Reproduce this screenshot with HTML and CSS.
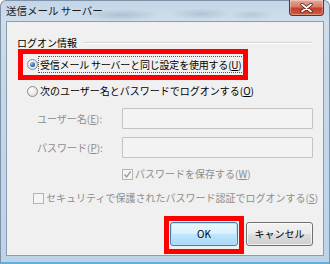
FILE: index.html
```html
<!DOCTYPE html>
<html lang="ja">
<head>
<meta charset="utf-8">
<title>送信メール サーバー</title>
<link rel="stylesheet" href="styles.css">
</head>
<body>
<div class="window">
  <div class="titlebar">
    <span class="title">送信メール サーバー</span>
    <div class="close">
      <svg width="13" height="10" viewBox="0 0 13 10"><path d="M2 1.5 L11 8.5 M11 1.5 L2 8.5" stroke="#3a1010" stroke-width="3.2" stroke-linecap="round"/><path d="M2 1.5 L11 8.5 M11 1.5 L2 8.5" stroke="#ffffff" stroke-width="1.8" stroke-linecap="round"/></svg>
    </div>
  </div>
  <div class="content">
    <div class="group-head"><span class="group-label">ログオン情報</span><span class="sep"></span></div>
    <div class="mark mark-radio">
      <div class="option">
        <span class="radio checked"></span>
        <span class="focus">受信メール サーバーと同じ設定を使用する(<u>U</u>)</span>
      </div>
    </div>
    <div class="option second">
      <span class="radio"></span>
      <span class="text">次のユーザー名とパスワードでログオンする(<u>O</u>)</span>
    </div>
    <div class="field first"><span class="field-label">ユーザー名(<u>E</u>):</span><span class="input"></span></div>
    <div class="field"><span class="field-label">パスワード(<u>P</u>):</span><span class="input"></span></div>
    <div class="check save">
      <span class="box"><svg width="9" height="9" viewBox="0 0 9 9"><path d="M1.5 4.5 L3.6 7 L7.6 1.5" fill="none" stroke="#9a9a9a" stroke-width="1.3"/></svg></span>
      <span class="check-text">パスワードを保存する(<u>W</u>)</span>
    </div>
    <div class="check spa">
      <span class="box"></span>
      <span class="check-text">セキュリティで保護されたパスワード認証でログオンする(<u>S</u>)</span>
    </div>
    <div class="buttons">
      <div class="mark mark-ok"><div class="btn ok">OK</div></div>
      <div class="btn cancel">キャンセル</div>
    </div>
  </div>
</div>
</body>
</html>
```
FILE: styles.css
```css
html, body {
  margin: 0;
  padding: 0;
}
body {
  width: 330px;
  height: 264px;
  overflow: hidden;
  font-family: "Noto Sans CJK JP", "Noto Sans", sans-serif;
  font-size: 10px;
  color: #000;
}
.window {
  width: 330px;
  height: 264px;
  box-sizing: border-box;
  display: flex;
  flex-direction: column;
  background:
    radial-gradient(ellipse 40px 6px at 120px 14px, rgba(120,140,165,0.35), transparent),
    radial-gradient(ellipse 30px 6px at 200px 13px, rgba(120,140,165,0.3), transparent),
    radial-gradient(ellipse 22px 5px at 250px 14px, rgba(120,140,165,0.25), transparent),
    linear-gradient(to bottom, #c3d5e7 0px, #cfdeec 20px, #c6d9eb 60px, #bcd3e8 100%);
  border: 1px solid #7f93a8;
  border-bottom: 2px solid #5fb2d9;
  border-radius: 6px 6px 0 0;
}
.titlebar {
  height: 20px;
  display: flex;
  align-items: flex-start;
}
.title {
  margin-left: 5px;
  margin-top: 3px;
  line-height: 14px;
  font-size: 10.5px;
  color: #1a1a1a;
}
.close {
  margin-left: auto;
  margin-right: 5px;
  margin-top: -1px;
  width: 35px;
  height: 16px;
  box-sizing: border-box;
  border: 1px solid #6b2a28;
  border-top: none;
  border-radius: 0 0 4px 4px;
  background: linear-gradient(to bottom, #e8a899 0%, #d67b68 45%, #c4402b 55%, #d05a3f 100%);
  display: flex;
  align-items: center;
  justify-content: center;
  box-shadow: inset 0 0 0 1px rgba(255,255,255,0.35);
}
.content {
  margin: 0 5px 6px 5px;
  flex: 1;
  background: #f0f0f0;
  border: 1px solid #8e9cab;
  box-sizing: border-box;
  padding-top: 14px;
}
.group-head {
  height: 13px;
  display: flex;
  align-items: center;
  padding-left: 10px;
  padding-right: 11px;
}
.group-label {
  line-height: 13px;
}
.sep {
  flex: 1;
  height: 0;
  border-top: 1px solid #d5d5d5;
  border-bottom: 1px solid #ffffff;
  margin-left: 6px;
}
.mark {
  border: 5px solid #ff0000;
  box-sizing: border-box;
}
.mark-radio {
  margin-left: 11px;
  width: 230px;
  height: 31px;
  display: flex;
  align-items: center;
}
.option {
  display: flex;
  align-items: center;
  height: 18px;
}
.mark-radio .option {
  padding-left: 4px;
}
.second {
  margin-top: 3px;
  padding-left: 20px;
  height: 16px;
}
.radio {
  width: 11px;
  height: 11px;
  box-sizing: border-box;
  border-radius: 50%;
  border: 1px solid #8d8d8d;
  background: radial-gradient(circle at 40% 35%, #ffffff 0, #e6e6e6 60%, #d0d0d0 100%);
  display: flex;
  align-items: center;
  justify-content: center;
  flex: none;
}
.radio.checked::after {
  content: "";
  width: 5px;
  height: 5px;
  border-radius: 50%;
  background: radial-gradient(circle at 35% 30%, #8fc3ef 0, #2a6cb5 60%, #1b4f8e 100%);
}
.focus {
  margin-left: 1px;
  padding: 0 1px 0 1px;
  outline: 1px dotted #555;
  line-height: 15px;
  white-space: nowrap;
  letter-spacing: -0.2px;
}
.text {
  margin-left: 2px;
  line-height: 14px;
  white-space: nowrap;
}
.field {
  display: flex;
  align-items: center;
  height: 21px;
  margin-top: 8px;
  padding-left: 30px;
}
.field.first {
  margin-top: 9px;
}
.field-label {
  width: 85px;
  color: #8d8d8d;
  line-height: 14px;
}
.input {
  width: 191px;
  height: 21px;
  box-sizing: border-box;
  border: 1px solid #c3c3c3;
  background: #f3f3f3;
  border-radius: 1px;
}
.check {
  display: flex;
  align-items: center;
  height: 16px;
  margin-top: 8px;
  color: #8d8d8d;
}
.save {
  padding-left: 115px;
}
.spa {
  padding-left: 26px;
}
.box {
  width: 11px;
  height: 11px;
  box-sizing: border-box;
  border: 1px solid #b3b3b3;
  background: #f4f4f4;
  display: flex;
  align-items: center;
  justify-content: center;
  flex: none;
}
.check-text {
  margin-left: 2px;
  line-height: 14px;
  white-space: nowrap;
}
.buttons {
  display: flex;
  align-items: flex-start;
  margin-top: 10px;
  padding-left: 157px;
}
.mark-ok {
  width: 80px;
  height: 38px;
  padding: 1px 0 0 1px;
}
.btn {
  height: 24px;
  box-sizing: border-box;
  border-radius: 3px;
  display: flex;
  align-items: center;
  justify-content: center;
  line-height: 14px;
  font-size: 10px;
}
.ok {
  width: 68px;
  border: 1px solid #3c7fb1;
  background: linear-gradient(to bottom, #eaf6fd 0%, #d9f0fc 48%, #bee6fd 52%, #a7d9f5 100%);
  box-shadow: inset 0 0 0 1px #b7e3fb;
}
.cancel {
  width: 67px;
  margin-left: 2px;
  margin-top: 6px;
  border: 1px solid #707070;
  background: linear-gradient(to bottom, #f2f2f2 0%, #ebebeb 48%, #dddddd 52%, #cfcfcf 100%);
  box-shadow: inset 0 0 0 1px rgba(255,255,255,0.7);
}
```
